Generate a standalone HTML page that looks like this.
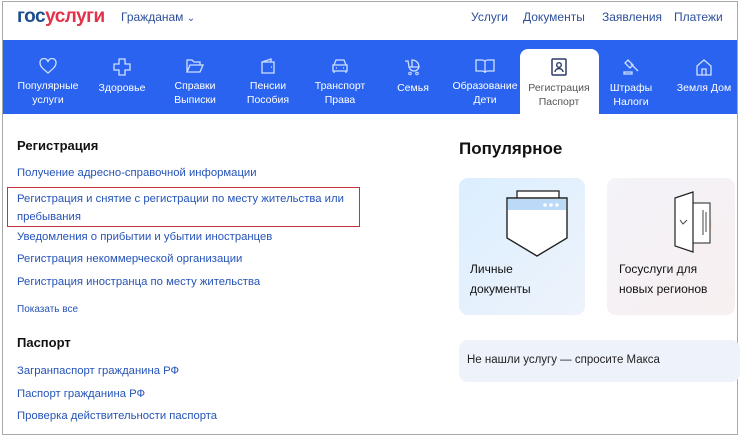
<!DOCTYPE html>
<html><head><meta charset="utf-8"><style>
*{margin:0;padding:0;box-sizing:border-box}
body{width:740px;height:437px;overflow:hidden;background:#fff;font-family:"Liberation Sans",sans-serif;position:relative}
.frame{position:absolute;left:2px;top:1px;width:736px;height:434px;border:1px solid #a9a9a9}
.a{position:absolute;white-space:nowrap}
.logo{left:17px;top:6px;font-size:19px;font-weight:bold;letter-spacing:-0.5px}
.top{top:10px;font-size:12px;color:#2d4f9a}
.band{position:absolute;left:3px;top:40px;width:734px;height:74px;background:#2a63f0}
.tab{position:absolute;top:49px;left:520px;width:79px;height:66px;background:#fff;border-radius:8px 8px 0 0}
.nav{position:absolute;top:0;width:74px;text-align:center;color:#fff;font-size:10.5px;line-height:14px;transform:translateX(-50%)}
.nav svg{display:block;margin:58px auto 5px;}
.h{font-size:13px;color:#111;font-weight:bold}
.l{font-size:11.3px;color:#2453b8}
.card{position:absolute;border-radius:9px}
</style></head><body>
<div class="frame"></div>
<div class="a logo"><span style="color:#1c4c8f">гос</span><span style="color:#e3314a">услуги</span></div>
<div class="a top" style="left:121px">Гражданам <span style="font-size:10px">⌄</span></div>
<div class="a top" style="left:471px">Услуги</div>
<div class="a top" style="left:523px">Документы</div>
<div class="a top" style="left:602px">Заявления</div>
<div class="a top" style="left:674px">Платежи</div>
<div class="band"></div>
<div class="tab"></div>
<div class="nav" style="left:48px"><svg width="18" height="16" viewBox="0 0 18 16"><path d="M9 15C3 10 1 8 1 5a4 4 0 0 1 8-1 4 4 0 0 1 8 1c0 3-2 5-8 10z" fill="none" stroke="#cfe0ff" stroke-width="1.3"/></svg>Популярные<br>услуги</div>
<div class="nav" style="left:122px"><svg width="18" height="18" viewBox="0 0 18 18"><path d="M6 1h6v5h5v6h-5v5H6v-5H1V6h5z" fill="none" stroke="#cfe0ff" stroke-width="1.3"/></svg>Здоровье</div>
<div class="nav" style="left:195px"><svg width="18" height="16" viewBox="0 0 18 16"><path d="M1 14V2h5l2 2h6v3M1 14l3-7h13l-3 7z" fill="none" stroke="#cfe0ff" stroke-width="1.3"/></svg>Справки<br>Выписки</div>
<div class="nav" style="left:268px"><svg width="16" height="16" viewBox="0 0 16 16"><path d="M2 4l9-3v3M2 4h12v11H2zM11 9h1" fill="none" stroke="#cfe0ff" stroke-width="1.3"/></svg>Пенсии<br>Пособия</div>
<div class="nav" style="left:340px"><svg width="18" height="16" viewBox="0 0 18 16"><path d="M3 7l2-5h8l2 5M2 7h14v6H2zM3 13v2M15 13v2M5 10h1M12 10h1" fill="none" stroke="#cfe0ff" stroke-width="1.3"/></svg>Транспорт<br>Права</div>
<div class="nav" style="left:413px"><svg width="18" height="18" viewBox="0 0 18 18"><path d="M1 3h3l1 6h10c0-4-3-7-7-7v7M5 9c1 3 3 4 5 4s4-1 5-4" fill="none" stroke="#cfe0ff" stroke-width="1.3"/><circle cx="6" cy="15.5" r="1.3" fill="none" stroke="#cfe0ff"/><circle cx="13" cy="15.5" r="1.3" fill="none" stroke="#cfe0ff"/></svg>Семья</div>
<div class="nav" style="left:485px"><svg width="20" height="16" viewBox="0 0 20 16"><path d="M1 2h6c2 0 3 1 3 2v11c0-1-1-2-3-2H1zM19 2h-6c-2 0-3 1-3 2v11c0-1 1-2 3-2h6z" fill="none" stroke="#cfe0ff" stroke-width="1.3"/></svg>Образование<br>Дети</div>
<div class="nav" style="left:559px;color:#555"><svg width="16" height="18" viewBox="0 0 16 18"><rect x="1" y="1" width="14" height="16" rx="1" fill="none" stroke="#2a3b66" stroke-width="1.5"/><circle cx="8" cy="7" r="2.3" fill="none" stroke="#2a3b66" stroke-width="1.4"/><path d="M4 14c0-2 2-3.5 4-3.5s4 1.5 4 3.5" fill="none" stroke="#2a3b66" stroke-width="1.4"/></svg>Регистрация<br>Паспорт</div>
<div class="nav" style="left:631px"><svg width="18" height="18" viewBox="0 0 18 18"><path d="M6 2l5 5-3 3-5-5zM9 6l7 7M2 16h8v-2H2z" fill="none" stroke="#cfe0ff" stroke-width="1.3"/></svg>Штрафы<br>Налоги</div>
<div class="nav" style="left:704px"><svg width="18" height="18" viewBox="0 0 18 18"><path d="M2 8l7-6 7 6v9H2zM7 17v-6h4v6" fill="none" stroke="#cfe0ff" stroke-width="1.3"/></svg>Земля Дом</div>

<div class="a h" style="left:17px;top:138px">Регистрация</div>
<div class="a l" style="left:17px;top:167px">Получение адресно-справочной информации</div>
<div class="a l" style="left:17px;top:190px;line-height:18px">Регистрация и снятие с регистрации по месту жительства или<br>пребывания</div>
<div class="a" style="left:7px;top:187px;width:353px;height:40px;border:1.5px solid #c8323e"></div>
<div class="a l" style="left:17px;top:231px">Уведомления о прибытии и убытии иностранцев</div>
<div class="a l" style="left:17px;top:253px">Регистрация некоммерческой организации</div>
<div class="a l" style="left:17px;top:276px">Регистрация иностранца по месту жительства</div>
<div class="a l" style="left:17px;top:304px;font-size:10px">Показать все</div>
<div class="a h" style="left:17px;top:335px">Паспорт</div>
<div class="a l" style="left:17px;top:365px">Загранпаспорт гражданина РФ</div>
<div class="a l" style="left:17px;top:388px">Паспорт гражданина РФ</div>
<div class="a l" style="left:17px;top:410px">Проверка действительности паспорта</div>

<div class="a" style="left:459px;top:139px;font-size:17px;font-weight:bold;color:#111">Популярное</div>
<div class="card" style="left:459px;top:178px;width:126px;height:137px;background:linear-gradient(135deg,#dbeeff,#eef3fb)"></div>
<svg class="a" style="left:505px;top:190px" width="75" height="75" viewBox="0 0 75 75"><rect x="12" y="1" width="42" height="12" fill="#fff" stroke="#222" stroke-width="1.3"/><path d="M2 8h60v40l-30 18L2 48z" fill="#fff" stroke="#222" stroke-width="1.4"/><rect x="3" y="9" width="58" height="11" fill="#bcd9f8"/><circle cx="40" cy="15" r="1.8" fill="#fff"/><circle cx="46" cy="15" r="1.8" fill="#fff"/><circle cx="52" cy="15" r="1.8" fill="#fff"/></svg>
<div class="a" style="left:470px;top:259px;font-size:12px;line-height:20px;color:#111">Личные<br>документы</div>
<div class="card" style="left:607px;top:178px;width:128px;height:137px;background:linear-gradient(135deg,#f3f3f8,#f7eff0)"></div>
<svg class="a" style="left:670px;top:190px" width="45" height="65" viewBox="0 0 45 65"><circle cx="24" cy="35" r="18" fill="#ffe2c2" opacity=".7"/><rect x="18" y="13" width="22" height="40" fill="#fff" stroke="#222"/><path d="M5 8l18-6v60L5 56z" fill="#fff" stroke="#222" stroke-width="1.2"/><path d="M10 30l3 4 4-4M33 20v25M36 22v20" stroke="#444" fill="none"/></svg>
<div class="a" style="left:619px;top:259px;font-size:12px;line-height:20px;color:#111">Госуслуги для<br>новых регионов</div>
<div class="card" style="left:459px;top:340px;width:281px;height:42px;background:#edf2fb"></div>
<div class="a" style="left:467px;top:354px;font-size:11.5px;color:#222">Не нашли услугу — спросите Макса</div>
</body></html>
